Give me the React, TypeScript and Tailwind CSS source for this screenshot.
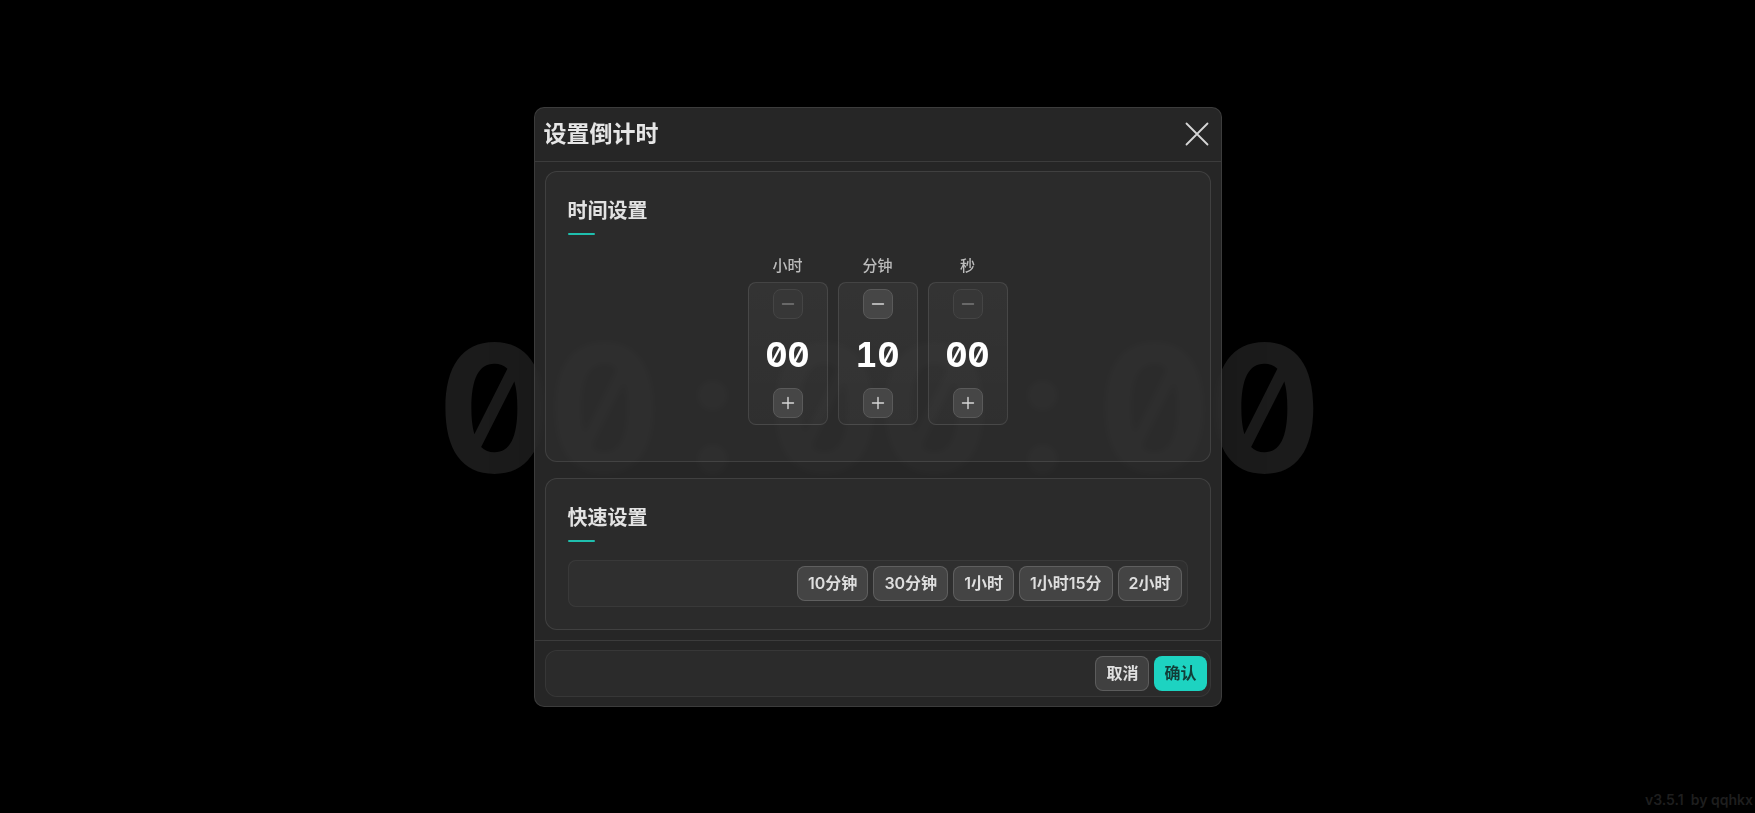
import React from "react";

const cjk = { fontFamily: 'Inter, "Noto Sans CJK SC", sans-serif' };
const digits = { fontFamily: 'Inter, "DejaVu Sans Mono", monospace' };

interface Unit {
  label: string;
  value: string;
  canDecrease: boolean;
}

const units: Unit[] = [
  { label: "小时", value: "00", canDecrease: false },
  { label: "分钟", value: "10", canDecrease: true },
  { label: "秒", value: "00", canDecrease: false },
];

const presets = ["10分钟", "30分钟", "1小时", "1小时15分", "2小时"];

const clock = "00:00:00".split("");

const MinusIcon = () => (
  <svg width="14" height="14" viewBox="0 0 14 14" fill="none">
    <path d="M1.5 7h11" stroke="currentColor" strokeWidth="1.4" strokeLinecap="round" />
  </svg>
);

const PlusIcon = () => (
  <svg width="14" height="14" viewBox="0 0 14 14" fill="none">
    <path d="M1.5 7h11M7 1.5v11" stroke="currentColor" strokeWidth="1.4" strokeLinecap="round" />
  </svg>
);

const SectionTitle: React.FC<{ title: string }> = ({ title }) => (
  <div>
    <h3 className="text-[20px] font-bold leading-[24px] text-[#e2e2e2]">{title}</h3>
    <div className="mt-[10px] h-[2px] w-[27px] rounded-full bg-[#1fbfae]" />
  </div>
);

const StepButton: React.FC<{ enabled: boolean; children: React.ReactNode }> = ({ enabled, children }) => (
  <button
    className={
      enabled
        ? "flex h-[30px] w-[30px] items-center justify-center rounded-lg border border-[#5a5a5a] bg-[#464646] text-[#d8d8d8]"
        : "flex h-[30px] w-[30px] items-center justify-center rounded-lg border border-[#454545] bg-[#373737] text-[#7a7a7a]"
    }
  >
    {children}
  </button>
);

export default function App() {
  return (
    <div className="relative h-screen w-full overflow-hidden bg-black" style={cjk}>
      {/* big background clock */}
      <div className="flex h-full w-full items-center justify-center pt-[3px]">
        <div className="flex text-[176px] font-bold leading-none text-[#1b1b1b] tabular-nums slashed-zero" style={digits}>
          {clock.map((c, i) => (
            <span key={i} className="w-[110px] text-center">
              {c}
            </span>
          ))}
        </div>
      </div>

      <div className="absolute bottom-[3px] right-[2px] text-[14px] font-semibold text-[#1e1e1e]">v3.5.1&nbsp; by qqhkx</div>

      {/* dialog */}
      <div className="absolute inset-0 flex items-center justify-center">
        <div className="w-[688px] overflow-hidden rounded-[10px] border border-white/10 bg-[rgba(44,44,44,0.86)] shadow-2xl backdrop-blur-[3px]">
          <div className="flex h-[54px] items-center justify-between border-b border-white/10 pl-[9px] pr-[12px]">
            <h2 className="text-[23px] font-bold text-[#e6e6e6]">设置倒计时</h2>
            <button className="text-[#d6d6d6]">
              <svg width="24" height="24" viewBox="0 0 24 24" fill="none">
                <path d="M1.5 1.5l21 21M22.5 1.5l-21 21" stroke="currentColor" strokeWidth="1.8" strokeLinecap="round" />
              </svg>
            </button>
          </div>

          <div className="flex flex-col gap-4 px-[10px] pb-[10px] pt-[9px]">
            <section className="rounded-xl border border-white/10 bg-white/[0.025] px-[22px] pb-[36px] pt-[27px]">
              <SectionTitle title="时间设置" />
              <div className="mt-[20px] flex justify-center gap-[10px]">
                {units.map((u) => (
                  <div key={u.label} className="flex flex-col items-center">
                    <span className="text-[15px] font-medium leading-[22px] text-[#bcbcbc]">{u.label}</span>
                    <div className="mt-[5px] flex h-[143px] w-[80px] flex-col items-center justify-between rounded-lg border border-white/10 bg-gradient-to-b from-white/[0.04] to-white/[0.025] py-[6px]">
                      <StepButton enabled={u.canDecrease}>
                        <MinusIcon />
                      </StepButton>
                      <span className="mt-[3px] text-[34px] font-bold leading-none text-white tabular-nums slashed-zero" style={digits}>
                        {u.value}
                      </span>
                      <StepButton enabled>
                        <PlusIcon />
                      </StepButton>
                    </div>
                  </div>
                ))}
              </div>
            </section>

            <section className="rounded-xl border border-white/10 bg-white/[0.025] px-[22px] pb-[22px] pt-[27px]">
              <SectionTitle title="快速设置" />
              <div className="mt-[18px] flex justify-end gap-[5px] rounded-lg border border-white/[0.05] bg-white/[0.02] p-[5px]">
                {presets.map((p) => (
                  <button
                    key={p}
                    className="h-[35px] rounded-lg border border-white/15 bg-white/10 px-[10px] text-[16px] font-semibold text-[#dedede]"
                  >
                    {p}
                  </button>
                ))}
              </div>
            </section>
          </div>

          <div className="border-t border-white/10 px-[10px] py-[9px]">
            <div className="flex justify-end gap-[5px] rounded-xl border border-white/[0.06] bg-white/[0.025] p-[5px] pr-[3px]">
              <button className="h-[35px] rounded-lg border border-white/15 bg-white/10 px-[10px] text-[16px] font-semibold text-[#e0e0e0]">
                取消
              </button>
              <button className="h-[35px] rounded-lg bg-[#1dd3c1] px-[10px] text-[16px] font-semibold text-[#123d38]">
                确认
              </button>
            </div>
          </div>
        </div>
      </div>
    </div>
  );
}
